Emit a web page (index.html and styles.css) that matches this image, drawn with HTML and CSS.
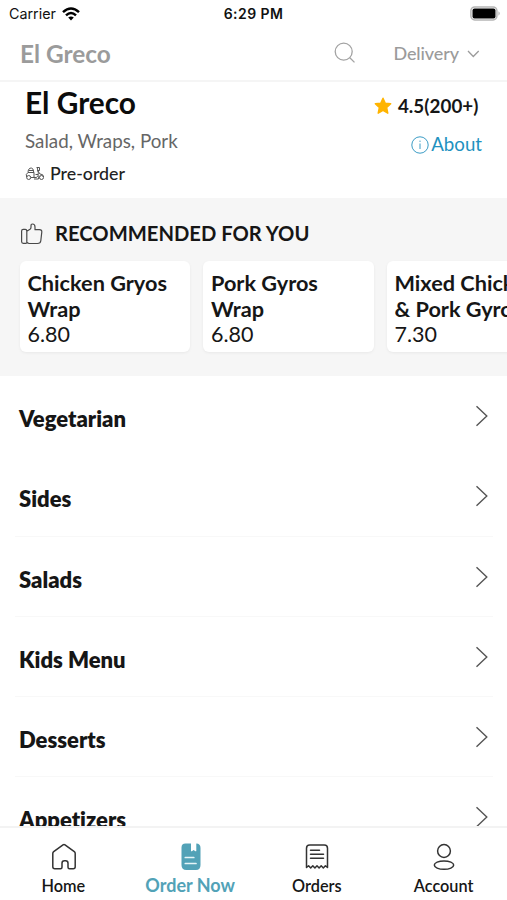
FILE: index.html
```html
<!DOCTYPE html>
<html lang="en">
<head>
<meta charset="utf-8">
<title>El Greco</title>
<link rel="stylesheet" href="styles.css">
</head>
<body>
<div class="app">
  <header class="status">
    <div class="carrier"><span>Carrier</span>
      <svg width="18" height="14" viewBox="0 0 18 14" fill="none" stroke="#000" stroke-width="2.5"><path d="M1 5.2Q9-2.2 17 5.2M4 8.3q5-4.6 10 0"/><path d="M6.2 10.5q2.8-2.2 5.6 0L9 13.4z" fill="#000" stroke="none"/></svg>
    </div>
    <div class="time">6:29 PM</div>
    <svg class="battery" width="31" height="15" viewBox="0 0 31 15"><rect x=".9" y=".9" width="26" height="13" rx="3.8" fill="#fff" stroke="#b5b5b5" stroke-width="1.5"/><rect x="2.5" y="2.5" width="23" height="10" rx="2" fill="#000"/><path d="M28.5 5.3q2.4 2.2 0 4.4z" fill="#aaa"/></svg>
  </header>
  <nav class="navbar">
    <div class="nav-title">El Greco</div>
    <svg class="search" width="22" height="22" viewBox="0 0 22 22" fill="none" stroke="#a3a3a3" stroke-width="1.3"><circle cx="9.7" cy="9.6" r="8.5"/><path d="M15.8 15.7l4.7 4.7"/></svg>
    <div class="delivery"><span>Delivery</span><svg width="14" height="10" viewBox="0 0 14 10" fill="none" stroke="#9b9b9b" stroke-width="1.3"><path d="M1 3l5.300 5.500L11.700 3"/></svg></div>
  </nav>
  <section class="info">
    <div class="info-main">
      <h1>El Greco</h1>
      <p class="cuisine">Salad, Wraps, Pork</p>
      <p class="preorder"><svg width="20" height="15" viewBox="0 0 20 15" fill="none" stroke="#555" stroke-width="1"><circle cx="3.700" cy="11.500" r="2"/><circle cx="16.500" cy="11.500" r="2"/><path d="M1.700 11.200Q.3 8 3 6.500h6v5H5.800M3 6.400Q3.200 2 6.300 2q2.200 0 2.500 4.500M3.500 4.500h5M9 11.500h2.500q2.200-1.300 1.800-5l-1-4.500M11.500 1.500h3v3h-2l2.500 3.500q3.500 0 3.700 3M10.500 8.500h2.500M14 9.500l-.5 3.500H9"/></svg><span>Pre-order</span></p>
    </div>
    <div class="info-side">
      <div class="rating"><svg width="18" height="18" viewBox="0 0 18 18"><path d="M9 1.2l2.300 5 5.400.6-4 3.800 1.100 5.600L9 13.400l-4.800 2.800 1.100-5.600-4-3.800 5.400-.6z" fill="#ffb400" stroke="#ffb400" stroke-width="1.400" stroke-linejoin="round"/></svg><span>4.5(200+)</span></div>
      <div class="about"><svg width="18" height="18" viewBox="0 0 18 18" fill="none" stroke="#3b9cc5"><circle cx="9" cy="9" r="8.200" stroke-width="1"/><path d="M9 7.500V13M9 4.600v1.300" stroke-width="1"/></svg><span>About</span></div>
    </div>
  </section>
  <section class="recommended">
    <h2><svg width="23" height="22" viewBox="0 0 23 22" fill="none" stroke="#494949" stroke-width="1.200" stroke-linejoin="round"><path d="M1.600 8q0-1.700 1.700-1.700h1.900Q6.800 6.300 6.800 8v11.500q0 .8-.9.8H3.300Q1.600 20.300 1.600 18.500zM6.800 8.200L10 6.300q1-.7 1-2V2.800Q11 1 12.500 1q2.500 0 2.500 3v2.700h4.500q2.500 0 2.300 2.300l-1 8.700q-.3 2.800-3.300 2.800H9.300q-1.500 0-2.500-1.300"/></svg><span>RECOMMENDED FOR YOU</span></h2>
    <div class="cards">
      <article class="card"><h3>Chicken Gryos<br>Wrap</h3><p>6.80</p></article>
      <article class="card"><h3>Pork Gyros<br>Wrap</h3><p>6.80</p></article>
      <article class="card"><h3>Mixed Chicken<br>&amp; Pork Gyros</h3><p>7.30</p></article>
    </div>
  </section>
  <main class="menu">
    <div class="row"><span>Vegetarian</span><svg class="chev" viewBox="0 0 14 22"><path d="M1.500 1.200l10.300 9.800L1.500 20.800"/></svg></div>
    <div class="row"><span>Sides</span><svg class="chev" viewBox="0 0 14 22"><path d="M1.500 1.200l10.300 9.800L1.500 20.800"/></svg></div>
    <div class="row"><span>Salads</span><svg class="chev" viewBox="0 0 14 22"><path d="M1.500 1.200l10.300 9.800L1.500 20.800"/></svg></div>
    <div class="row"><span>Kids Menu</span><svg class="chev" viewBox="0 0 14 22"><path d="M1.500 1.200l10.300 9.800L1.500 20.800"/></svg></div>
    <div class="row"><span>Desserts</span><svg class="chev" viewBox="0 0 14 22"><path d="M1.500 1.200l10.300 9.800L1.500 20.800"/></svg></div>
    <div class="row"><span>Appetizers</span><svg class="chev" viewBox="0 0 14 22"><path d="M1.500 1.200l10.300 9.800L1.500 20.800"/></svg></div>
  </main>
  <footer class="tabs">
    <div class="tab"><svg width="28" height="28" viewBox="0 0 28 28" fill="none" stroke="#333" stroke-width="1.500" stroke-linejoin="round"><path d="M2.800 10.400q0-1 .9-1.700L13 1.800q1-.7 2 0l9.300 6.900q.9.700.9 1.700v13.300q0 2-2 2h-3.700q-1.500 0-1.500-1.500v-4q0-2.400-2.400-2.400h-1.200q-2.400 0-2.400 2.400v4q0 1.500-1.500 1.500H4.800q-2 0-2-2z"/></svg><span>Home</span></div>
    <div class="tab active"><svg width="28" height="28" viewBox="0 0 28 28"><path d="M8.500.5H14v7.200q0 1 .9.5l1.700-1.300 1.800 1.300q.9.500.9-.5V.5q4.200.2 4.200 4.500v17q0 5-4.500 5H9.500q-5 0-5-5V4.500q0-4 4-4z" fill="#52a2b7"/><path d="M8.300 14.500h8.500M8.300 20.500h10.700" stroke="#e6f5f8" stroke-width="1.700" stroke-linecap="round"/></svg><span>Order Now</span></div>
    <div class="tab"><svg width="28" height="28" viewBox="0 0 28 28" fill="none" stroke="#333" stroke-width="1.500" stroke-linejoin="round"><path d="M3.500 24.500V5.200Q3.500 2 6.700 2h14.600q3.200 0 3.200 3.200V24.500l-2.100-1.800-2.100 2.200-2.100-2.200-2.100 2.200-2.100-2.200-2.100 2.200-2.100-2.200-2.100 2.200-2.100-2.200z"/><path d="M7.500 7.300h9M7.500 11.300h13M7.500 15.300h13" stroke-linecap="round"/></svg><span>Orders</span></div>
    <div class="tab"><svg width="28" height="28" viewBox="0 0 28 28" fill="none" stroke="#333" stroke-width="1.500"><circle cx="14" cy="8" r="6.400"/><ellipse cx="14" cy="22.100" rx="9.700" ry="4.200"/></svg><span>Account</span></div>
  </footer>
</div>
</body>
</html>
```
FILE: styles.css
```css
* { box-sizing: border-box; margin: 0; padding: 0; }
body { background: #fff; color: #161616; font-family: Lato, "Liberation Sans", sans-serif; font-variant-ligatures: none; overflow: hidden; }
svg { display: block; flex: none; }
.app { height: 900px; width: 507px; display: flex; flex-direction: column; overflow: hidden; }

.status { height: 27px; flex: none; display: grid; grid-template-columns: 1fr auto 1fr; align-items: center; padding: 0 6px 0 9px; font-family: Inter, sans-serif; font-size: 13.5px; color: #111; }
.carrier { display: flex; align-items: center; gap: 6px; font-size: 14.3px; }
.time { font-weight: 600; font-size: 14px; letter-spacing: .45px; margin-left: -3px; }
.battery { justify-self: end; }

.navbar { height: 55px; flex: none; display: flex; align-items: center; padding: 0 26px 1px 20px; border-bottom: 2px solid #f5f5f5; color: #9b9b9b; }
.nav-title { flex: 1; font-size: 24.4px; font-weight: 700; }
.search { margin-right: 37px; }
.delivery { display: flex; align-items: center; gap: 8px; font-size: 18px; letter-spacing: -.1px; font-weight: 500; }

.info { height: 116px; flex: none; display: flex; justify-content: space-between; padding: 5px 25px 0; }
h1 { font-size: 29.8px; line-height: 32px; font-weight: 700; color: #0c0c0c; }
.cuisine { margin-top: 11px; font-size: 18.8px; line-height: 22px; color: #666; }
.preorder { margin-top: 11px; display: flex; align-items: center; gap: 5px; font-size: 17.8px; line-height: 20px; font-weight: 500; color: #222; }
.info-side { display: flex; flex-direction: column; align-items: flex-end; padding-top: 8px; }
.rating { display: flex; align-items: center; gap: 6px; margin-right: 3.5px; font-size: 18.8px; line-height: 22px; font-weight: 700; letter-spacing: .05px; }
.about { margin-top: 16px; display: flex; align-items: center; gap: 2px; font-size: 18.7px; line-height: 23px; color: #2191c0; }

.recommended { height: 178px; flex: none; background: #f6f6f6; padding: 22px 0 0 20px; }
h2 { display: flex; align-items: center; gap: 12px; font-size: 20.2px; line-height: 28px; font-weight: 700; white-space: nowrap; }
h2 span { line-height: 26px; padding-bottom: 2px; }
.cards { display: flex; gap: 13px; margin-top: 13px; margin-left: -.5px; }
.card { width: 170.5px; height: 91px; flex: none; padding: 10px 8px; background: #fff; border-radius: 6px; box-shadow: 0 1px 3px rgba(0,0,0,.06); font-size: 21.5px; line-height: 25.5px; white-space: nowrap; }
h3 { font-size: 21.7px; font-weight: 700; }

.menu { flex: 1; min-height: 0; overflow: hidden; padding: 0 14px 0 15px; }
.row { height: 80.3px; display: flex; justify-content: space-between; align-items: flex-start; padding: 29px 4px 0; border-bottom: 1px solid #f8f8f8; font-size: 22px; line-height: 28px; font-weight: 800; }
.row:first-child { border-color: transparent; }
.chev { width: 14px; height: 22px; fill: none; stroke: #555; stroke-width: 1.4; }

.tabs { height: 74px; flex: none; display: grid; grid-template-columns: repeat(4, 1fr); padding-top: 15px; border-top: 2px solid #f3f3f3; }
.tab { display: flex; flex-direction: column; align-items: center; gap: 4px; font-size: 16.3px; line-height: 22px; font-weight: 600; }
.tab svg { position: relative; left: .5px; }
.active { color: #52a2b7; font-size: 18px; line-height: 21px; font-weight: 700; }
```
